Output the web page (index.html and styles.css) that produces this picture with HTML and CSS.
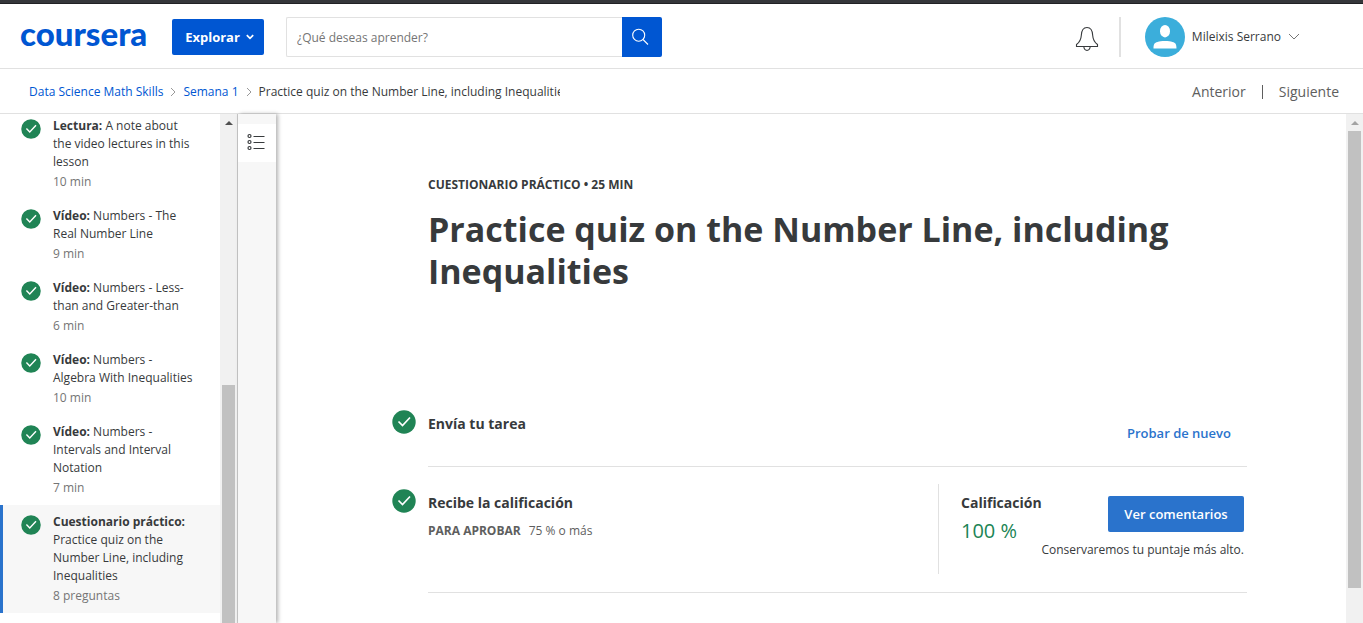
FILE: index.html
```html
<!DOCTYPE html>
<html lang="es">
<head>
<meta charset="utf-8">
<title>Practice quiz on the Number Line | Coursera</title>
<link rel="stylesheet" href="styles.css">
</head>
<body>
<svg class="sprite" aria-hidden="true">
  <symbol id="check" viewBox="0 0 24 24">
    <circle cx="12" cy="12" r="11.700" fill="#208455"/>
    <path d="M6.500 11.500l4 4 7.500-8" fill="none" stroke="#fff" stroke-width="1.700"/>
  </symbol>
  <symbol id="crumb-arrow" viewBox="0 0 6 10">
    <path d="M1 1l4 4-4 4" fill="none" stroke="#999" stroke-width="1"/>
  </symbol>
</svg>
<div class="strip"></div>
<header class="header">
  <a class="logo" href="#">coursera</a>
  <button class="explore" type="button">Explorar
    <svg width="8" height="6" viewBox="0 0 8 6"><path d="M.8 1.200L4 4.400l3.200-3.200" fill="none" stroke="#fff" stroke-width="1.700"/></svg>
  </button>
  <form class="search">
    <input class="search-box" type="text" aria-label="Buscar" placeholder="¿Qué deseas aprender?">
    <button class="search-button" type="button" aria-label="Buscar">
      <svg width="20" height="18" viewBox="0 0 20 18" fill="none" stroke="#fff" stroke-width="1.100"><circle cx="6.700" cy="7.200" r="6"/><path d="M11 11.500l5 5"/></svg>
    </button>
  </form>
  <div class="account">
    <button class="bell" type="button" aria-label="Notificaciones">
      <svg width="24" height="26" viewBox="0 0 24 26" fill="none" stroke="#373a3c" stroke-width="1.100"><path d="M1.500 20.500v-2c3-2.200 4.500-4.500 4.800-9C6.500 4.500 8.200 1.500 12 1.500s5.500 3 5.700 8c.3 4.500 1.800 6.800 4.800 9v2z"/><path d="M8.800 20.800c.3 2.300 1.500 3.600 3.200 3.600s2.900-1.300 3.200-3.600"/></svg>
    </button>
    <button class="profile" type="button">
      <svg width="40" height="40" viewBox="0 0 40 40"><circle cx="20" cy="20" r="20" fill="#3baedb"/><ellipse cx="20" cy="14.200" rx="5" ry="6.200" fill="#fff"/><path d="M8.500 31.500c0-4.500 1-5.700 4-6.500 2-.6 4-1 7.500-1s5.500.4 7.500 1c3 .8 4 2 4 6.500z" fill="#fff"/></svg>
      <span>Mileixis Serrano</span>
      <svg width="12" height="8" viewBox="0 0 12 8"><path d="M1 1l5 5 5-5" fill="none" stroke="#757575"/></svg>
    </button>
  </div>
</header>
<div class="subheader">
  <nav class="crumbs" aria-label="Ruta">
    <a href="#">Data Science Math Skills</a>
    <svg width="6" height="10"><use href="#crumb-arrow"/></svg>
    <a href="#">Semana 1</a>
    <svg width="6" height="10"><use href="#crumb-arrow"/></svg>
    <span class="crumb-current">Practice quiz on the Number Line, including Inequalities</span>
  </nav>
  <nav class="pager" aria-label="Elementos">
    <a class="pager-prev" href="#">Anterior</a>
    <a class="pager-next" href="#">Siguiente</a>
  </nav>
</div>
<div class="workspace">
  <aside class="sidebar">
    <ul class="lessons">
      <li class="lesson"><svg class="lesson-icon"><use href="#check"/></svg><a href="#"><strong>Lectura:</strong> A note about the video lectures in this lesson<small>10 min</small></a></li>
      <li class="lesson"><svg class="lesson-icon"><use href="#check"/></svg><a href="#"><strong>Vídeo:</strong> Numbers - The Real Number Line<small>9 min</small></a></li>
      <li class="lesson"><svg class="lesson-icon"><use href="#check"/></svg><a href="#"><strong>Vídeo:</strong> Numbers - Less-than and Greater-than<small>6 min</small></a></li>
      <li class="lesson"><svg class="lesson-icon"><use href="#check"/></svg><a href="#"><strong>Vídeo:</strong> Numbers - Algebra With Inequalities<small>10 min</small></a></li>
      <li class="lesson"><svg class="lesson-icon"><use href="#check"/></svg><a href="#"><strong>Vídeo:</strong> Numbers - Intervals and Interval Notation<small>7 min</small></a></li>
      <li class="lesson lesson-active"><svg class="lesson-icon"><use href="#check"/></svg><a href="#"><strong>Cuestionario práctico:</strong> Practice quiz on the Number Line, including Inequalities<small>8 preguntas</small></a></li>
    </ul>
    <div class="scrollbar scrollbar-side">
      <svg class="scroll-arrow" viewBox="0 0 8 4"><path d="M0 4l4-4 4 4z" fill="#505050"/></svg>
      <div class="scroll-space"></div>
      <div class="scroll-thumb"></div>
    </div>
  </aside>
  <div class="rail">
    <button class="rail-button" type="button" aria-label="Lista">
      <svg width="20" height="20" viewBox="0 0 20 20" fill="none" stroke="#373a3c" stroke-width="1.200"><circle cx="2.500" cy="3" r="1.500"/><circle cx="2.500" cy="9" r="1.500"/><circle cx="2.500" cy="15" r="1.500"/><path d="M6.500 3.500h11M6.500 9.500h11M6.500 15.500h11"/></svg>
    </button>
  </div>
  <main class="content">
    <div class="intro">
      <p class="kind">CUESTIONARIO PRÁCTICO • 25 MIN</p>
      <h1>Practice quiz on the Number Line, including Inequalities</h1>
    </div>
    <section class="step">
      <svg class="step-icon"><use href="#check"/></svg>
      <div class="step-body step-submit">
        <h2>Envía tu tarea</h2>
        <button class="retry" type="button">Probar de nuevo</button>
      </div>
    </section>
    <section class="step">
      <svg class="step-icon"><use href="#check"/></svg>
      <div class="step-body step-grade">
        <div class="requirement">
          <h2>Recibe la calificación</h2>
          <p class="pass"><strong>PARA APROBAR</strong><span>75 % o más</span></p>
        </div>
        <div class="grade">
          <div class="score">
            <h2>Calificación</h2>
            <p class="score-value">100 %</p>
          </div>
          <button class="feedback" type="button">Ver comentarios</button>
          <p class="keep">Conservaremos tu puntaje más alto.</p>
        </div>
      </div>
    </section>
  </main>
  <div class="scrollbar scrollbar-main">
    <svg class="scroll-arrow" viewBox="0 0 8 4"><path d="M0 4l4-4 4 4z" fill="#a3a3a3"/></svg>
    <div class="scroll-thumb"></div>
    <div class="scroll-space"></div>
  </div>
</div>
</body>
</html>
```
FILE: styles.css
```css
* { box-sizing: border-box; }
body {
  margin: 0;
  height: 100vh;
  display: flex;
  flex-direction: column;
  overflow: hidden;
  background: #fff;
  color: #373a3c;
  font-family: "Open Sans", "Noto Sans", sans-serif;
  font-size: 12px;
  line-height: 18px;
}
a { color: inherit; text-decoration: none; }
button { font: inherit; color: inherit; border: 0; padding: 0; background: none; cursor: pointer; }
h1, h2, p, ul { margin: 0; padding: 0; }
svg { flex: none; display: block; }
.sprite { display: none; }

.strip { flex: none; height: 4px; background: #35363a; border-bottom: 1px solid #202124; }

.header {
  flex: none;
  height: 65px;
  display: flex;
  align-items: center;
  padding: 2px 63px 0 20px;
  border-bottom: 1px solid #e1e1e1;
}
.logo {
  width: 152px;
  padding-bottom: 8px;
  font-family: Lato, sans-serif;
  font-size: 33px;
  font-weight: 900;
  line-height: 40px;
  color: #0056d2;
}
.explore {
  width: 92px;
  height: 36px;
  display: flex;
  align-items: center;
  justify-content: center;
  gap: 6px;
  padding-left: 3px;
  border-radius: 2px;
  background: #0056d2;
  color: #fff;
  font-size: 13px;
  font-weight: 700;
}
.search { display: flex; width: 376px; margin-left: 22px; }
.search-box {
  flex: 1;
  min-width: 0;
  height: 40px;
  padding: 0 10px;
  border: 1px solid #e1e1e1;
  border-right: 0;
  border-radius: 2px 0 0 2px;
  font: inherit;
  font-size: 12px;
}
.search-box::placeholder { color: #757575; }
.search-button {
  width: 40px;
  height: 40px;
  display: grid;
  place-items: center;
  border-radius: 0 2px 2px 0;
  background: #0056d2;
}
.account { display: flex; align-items: center; margin-left: auto; }
.bell { padding: 4px 20px 0 0; }
.profile {
  height: 40px;
  display: flex;
  align-items: center;
  gap: 7px;
  padding-left: 24px;
  border-left: 2px solid #e1e1e1;
}

.subheader {
  flex: none;
  height: 45px;
  display: flex;
  align-items: center;
  justify-content: space-between;
  padding: 2px 24px 0 29px;
  border-bottom: 1px solid #e1e1e1;
}
.crumbs { display: flex; align-items: center; gap: 7px; white-space: nowrap; }
.crumbs a { color: #0056d2; }
.crumb-current { width: 301px; overflow: hidden; }
.pager { display: flex; align-items: center; font-size: 14px; color: #5e5e5e; }
.pager-prev { padding-right: 16px; }
.pager-next { padding-left: 16px; line-height: 14px; border-left: 1px solid #5e5e5e; }

.workspace { flex: 1; min-height: 0; display: flex; }
.sidebar { flex: none; width: 238px; display: flex; border-right: 1px solid #c8c8c8; }
.lessons { flex: 1; margin-top: -5px; list-style: none; }
.lesson {
  display: flex;
  gap: 12px;
  padding: 8px 25px 8px 18px;
  border-left: 3px solid transparent;
}
.lesson-active { background: #f7f7f7; border-left-color: #2a73cc; }
.lesson-icon { width: 20px; height: 20px; margin-top: 2px; }
.lesson small { display: block; margin-top: 2px; font-size: 12px; color: #757575; }

.scrollbar {
  flex: none;
  width: 17px;
  display: flex;
  flex-direction: column;
  align-items: center;
  background: #f1f1f1;
}
.scroll-arrow { width: 8px; height: 4px; margin: 7px 0 6px; }
.scroll-thumb { width: 13px; background: #c1c1c1; }
.scrollbar-side .scroll-thumb { flex: 238; }
.scrollbar-side .scroll-space { flex: 254; }
.scrollbar-main .scroll-thumb { flex: 457; }
.scrollbar-main .scroll-space { flex: 35; }

.rail {
  flex: none;
  width: 38px;
  padding-top: 10px;
  background: #f7f7f7;
  box-shadow: 2px 0 4px rgba(0, 0, 0, 0.3);
}
.rail-button { width: 38px; height: 38px; display: grid; place-items: center; background: #fff; }

.content { flex: 1; min-width: 0; padding: 62px 99px 0 116px; }
.intro { min-height: 212px; padding-left: 36px; }
.kind { font-weight: 700; }
h1 { margin-top: 14px; font-size: 34px; line-height: 42px; font-weight: 700; }
h2 { font-size: 14px; line-height: 20px; font-weight: 700; }
.step { display: flex; gap: 12px; padding-top: 17px; }
.step-icon { width: 24px; height: 24px; margin-top: 5px; }
.step-body { flex: 1; display: flex; justify-content: space-between; border-bottom: 1px solid #e1e1e1; }
.step-submit { height: 62px; padding: 9px 16px 0 0; }
.retry { align-self: flex-start; margin-top: 10px; font-size: 13px; font-weight: 600; color: #2a73cc; }
.requirement { padding-top: 9px; }
.pass { display: flex; gap: 8px; margin-top: 9px; color: #5e5e5e; }
.pass strong { font-weight: 700; }
.grade {
  width: 309px;
  height: 90px;
  margin-bottom: 18px;
  display: grid;
  grid-template-columns: 1fr 136px;
  grid-template-rows: 36px 18px;
  row-gap: 9px;
  padding: 12px 3px 0 22px;
  border-left: 1px solid #e1e1e1;
}
.score { margin-top: -3px; }
.score-value { margin-top: 4px; font-size: 20px; line-height: 28px; color: #208455; }
.feedback { height: 36px; border-radius: 2px; background: #2a73cc; color: #fff; font-size: 13px; font-weight: 600; }
.keep { grid-column: 1 / -1; text-align: right; }
```
